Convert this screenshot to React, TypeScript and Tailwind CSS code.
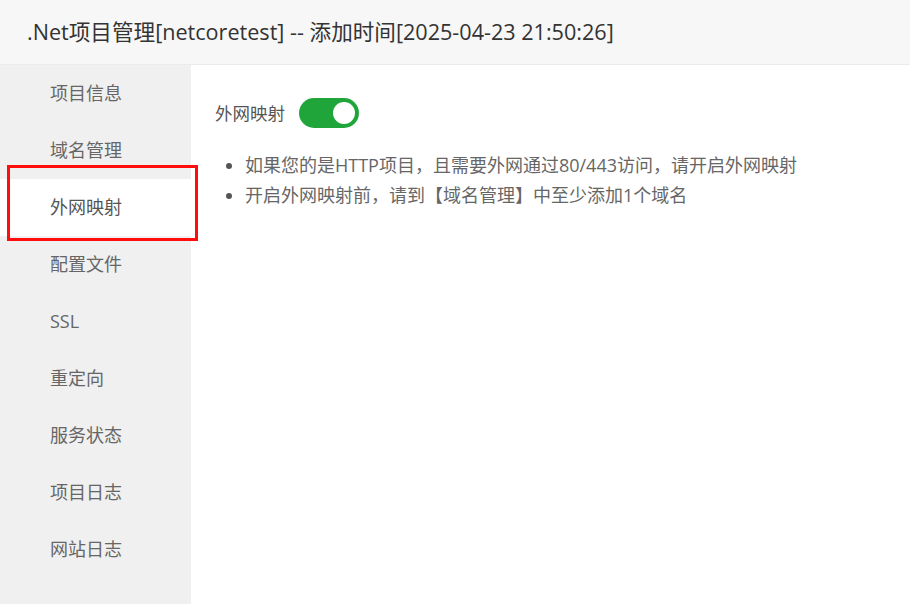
const menu = ['项目信息', '域名管理', '外网映射', '配置文件', 'SSL', '重定向', '服务状态', '项目日志', '网站日志'];

export default function App() {
  const active = '外网映射';

  return (
    <div
      className="relative flex h-[604px] w-[910px] flex-col overflow-hidden bg-white"
      style={{ fontFamily: '"Open Sans", "Noto Sans CJK SC", sans-serif' }}
    >
      {/* title bar */}
      <div className="flex h-[65px] shrink-0 items-center border-b border-[#ebebeb] bg-[#f7f7f7] pl-[27px]">
        <span className="text-[21.6px] text-[#333]">
          .Net项目管理[netcoretest] -- 添加时间[2025-04-23 21:50:26]
        </span>
      </div>

      <div className="flex flex-1">
        {/* side menu */}
        <div className="w-[191px] shrink-0 bg-[#f0f0f0]">
          {menu.map((item) => (
            <div
              key={item}
              className={
                item === active
                  ? 'flex h-[57px] items-center bg-white pb-[1px] pl-[50px] text-[18px] text-[#555]'
                  : 'flex h-[57px] items-center pb-[1px] pl-[50px] text-[18px] text-[#666]'
              }
            >
              {item}
            </div>
          ))}
        </div>

        {/* content */}
        <div className="flex-1 pl-[24px] pt-[33px]">
          <div className="flex items-center gap-[14px]">
            <span className="text-[17.5px] text-[#555]">外网映射</span>
            <div className="flex h-[30px] w-[60px] items-center justify-end rounded-full bg-[#20a53a] pr-[4px]">
              <div className="h-[22px] w-[22px] rounded-full bg-white" />
            </div>
          </div>
          <ul className="mt-[22px] list-disc pl-[30px] text-[18px] leading-[30px] text-[#666] marker:text-[#555]">
            <li>如果您的是HTTP项目，且需要外网通过80/443访问，请开启外网映射</li>
            <li>开启外网映射前，请到【域名管理】中至少添加1个域名</li>
          </ul>
        </div>
      </div>

      {/* highlight annotation */}
      <div className="absolute left-[7px] top-[165px] h-[76px] w-[191px] border-[3px] border-[#ff0d0d]" />
    </div>
  );
}
